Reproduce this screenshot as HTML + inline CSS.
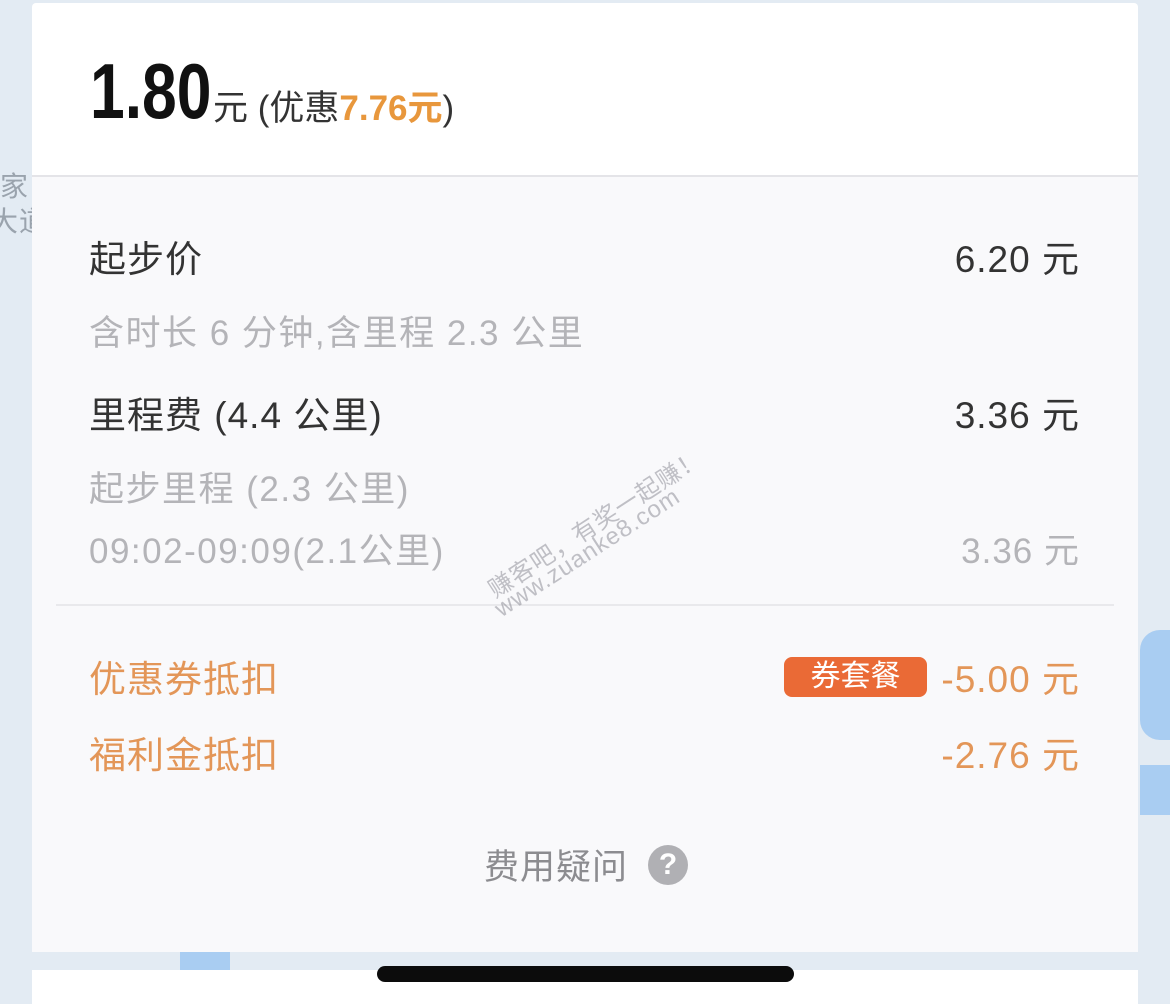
<!DOCTYPE html>
<html><head><meta charset="utf-8"><style>
body{margin:0;width:1170px;height:1004px;overflow:hidden;background:#e3ebf3;position:relative;font-family:"Liberation Sans","Noto Sans CJK SC",sans-serif}
.a{position:absolute}
.card{left:32px;width:1106px}
.t{position:absolute;white-space:nowrap;font-size:37px;letter-spacing:1px}
.r{right:90px}
</style></head><body>
<div class="a" style="left:1140px;top:630px;width:40px;height:110px;background:#a9cdf2;border-radius:20px 0 0 20px"></div>
<div class="a" style="left:1140px;top:765px;width:40px;height:50px;background:#a9cdf2"></div>
<div class="a" style="left:180px;top:950px;width:50px;height:20px;background:#a9cdf2"></div>
<div class="t" style="left:0;top:165px;font-size:28px;color:#9aa3ad">家</div>
<div class="t" style="left:-10px;top:200px;font-size:28px;color:#9aa3ad">大道</div>
<div class="a card" style="top:3px;height:172px;background:#fff;border-radius:4px 4px 0 0"></div>
<div class="a card" style="top:175px;height:775px;background:#f9f9fb;border-top:2px solid #e4e4e8"></div>
<div class="a card" style="top:970px;height:34px;background:#fff"></div>
<div class="a" style="left:377px;top:966px;width:417px;height:16px;border-radius:8px;background:#0c0c0c"></div>

<div class="t" style="left:90px;top:46px;font-size:78px;font-weight:bold;color:#111;letter-spacing:0;transform:scaleX(0.8);transform-origin:left top">1.80</div>
<div class="t" style="left:213px;top:80px;font-size:35px;color:#333;letter-spacing:0">元 (优惠<span style="color:#e8973c;font-weight:bold">7.76元</span>)</div>

<div class="t" style="left:89px;top:229px;color:#333">起步价</div>
<div class="t r" style="top:229px;color:#333">6.20 元</div>
<div class="t" style="left:89px;top:305px;font-size:35px;color:#b4b4b8;letter-spacing:1.5px">含时长 6 分钟,含里程 2.3 公里</div>
<div class="t" style="left:89px;top:385px;color:#333">里程费 (4.4 公里)</div>
<div class="t r" style="top:385px;color:#333">3.36 元</div>
<div class="t" style="left:89px;top:461px;font-size:35px;color:#b4b4b8;letter-spacing:1.5px">起步里程 (2.3 公里)</div>
<div class="t" style="left:89px;top:523px;font-size:35px;color:#b4b4b8;letter-spacing:1.5px">09:02-09:09(2.1公里)</div>
<div class="t r" style="top:523px;font-size:35px;color:#b4b4b8">3.36 元</div>
<div class="a" style="left:56px;top:604px;width:1058px;height:2px;background:#e9e9ec"></div>
<div class="t" style="left:480px;top:575px;font-size:24px;color:rgba(120,120,130,.45);transform:rotate(-33deg);transform-origin:left top">赚客吧，有奖一起赚！</div>
<div class="t" style="left:490px;top:600px;font-size:24px;color:rgba(120,120,130,.45);transform:rotate(-33deg);transform-origin:left top">www.zuanke8.com</div>

<div class="t" style="left:89px;top:649px;color:#e39658">优惠券抵扣</div>
<div class="a" style="left:784px;top:657px;width:143px;height:40px;background:#ea6a36;border-radius:8px;color:#fff;font-size:30px;text-align:center;line-height:40px">券套餐</div>
<div class="t r" style="top:649px;color:#e39658">-5.00 元</div>
<div class="t" style="left:89px;top:725px;color:#e39658">福利金抵扣</div>
<div class="t r" style="top:725px;color:#e39658">-2.76 元</div>

<div class="t" style="left:484px;top:839px;font-size:35px;color:#8c8c90">费用疑问</div>
<div class="a" style="left:648px;top:845px;width:40px;height:40px;border-radius:50%;background:#b0b0b4;color:#fff;font-size:30px;font-weight:bold;text-align:center;line-height:40px">?</div>
</body></html>
